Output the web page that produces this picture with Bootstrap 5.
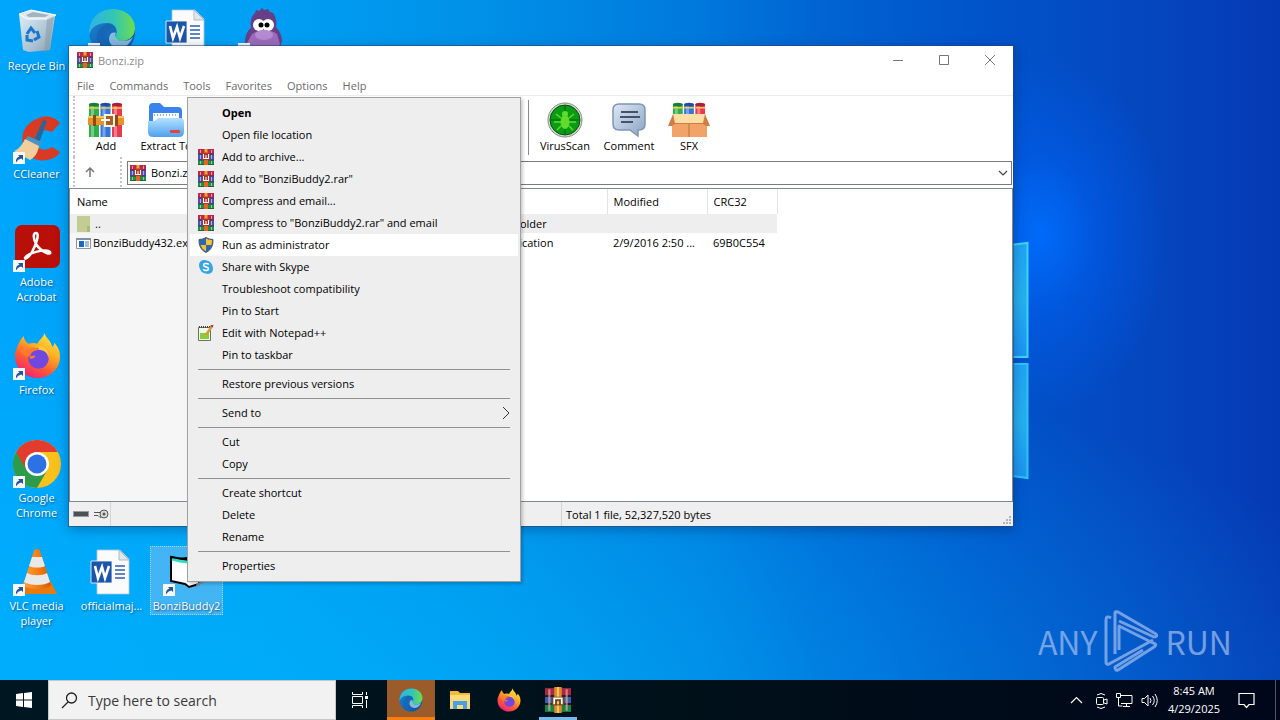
<!DOCTYPE html>
<html lang="en">
<head>
<meta charset="utf-8">
<meta name="viewport" content="width=device-width, initial-scale=1">
<title>Desktop</title>
<link href="https://cdn.jsdelivr.net/npm/bootstrap@5.3.0/dist/css/bootstrap.min.css" rel="stylesheet">
<style>
  body { font-family: "Open Sans", "Noto Sans", sans-serif; font-size: 11px; line-height: 15px; color: #000; }
  button { font: inherit; color: inherit; border: 0; background: none; padding: 0; }
  svg { display: block; }
  .desk {
    background:
      radial-gradient(ellipse 130px 180px at 1040px 235px, rgba(0,110,255,.9), rgba(0,100,255,.4) 45%, rgba(0,90,240,0)),
      radial-gradient(ellipse 85% 420px at 30% 110%, rgba(0,184,255,.6), rgba(0,170,255,0)),
      linear-gradient(to right, #00a6fb 0, #00a0f4 20%, #0090e8 38%, #0078dc 55%, #0064d2 64%, #0054ca 76%, #0448c0 88%, #053ab4 100%);
  }
  .wallpaper { position: absolute; left: 960px; top: 230px; }
  /* desktop shortcuts */
  .shortcuts { display: grid; grid-template-columns: repeat(4, 75px); grid-template-rows: repeat(6, 108px); padding-top: 6px; }
  .shortcut { width: 73px; height: fit-content; padding: 1px 0; color: #fff; text-decoration: none; text-align: center; border: 1px solid transparent; white-space: nowrap; }
  .shortcut svg { margin: 0 auto 2px; }
  .shortcut span { display: block; text-shadow: 1px 1px 2px rgba(0,40,90,.7); }
  .shortcut.selected { background: rgba(120,190,240,.55); border: 1px dotted #9fd6f8; }
  /* archive window */
  .window { position: absolute; left: 69px; right: 267px; top: 46px; bottom: 154px; background: #fff; box-shadow: 0 0 0 1px rgba(40,70,110,.55), 0 3px 12px rgba(0,20,60,.35); }
  .titlebar { height: 30px; padding-left: 8px; color: #8c8c8c; }
  .titlebar .title { gap: 5px; padding-bottom: 2px; }
  .caption { width: 46px; height: 28px; }
  .menubar { height: 20px; color: #6a6a6a; border-bottom: 1px solid #ececec; padding-left: 8px; gap: 15px; }
  .handle { width: 3px; border-left: 2px dotted #c4c4c4; margin-left: 4px; }
  .tools { height: 61px; }
  .tool { width: 60px; white-space: nowrap; }
  .tool svg { margin: 2px auto 0; }
  .more-tools { width: 332px; }
  .rule-v { width: 1px; background: #8a8a8a; margin: 4px 6px 2px 0; }
  .address { height: 30px; }
  .path-box { margin: 4px 1px 2px 0; }
  .path-box svg { position: absolute; left: 3px; top: 4px; }
  .path-box select { height: 24px; border: 1px solid #7a7a7a; border-radius: 0; padding: 0 20px 0 23px; font-size: 11px; line-height: 20px; color: #000; background-size: 10px; background-position: right 3px center;
    background-image: url("data:image/svg+xml,%3Csvg xmlns='http://www.w3.org/2000/svg' viewBox='0 0 10 10'%3E%3Cpath d='M1 3l4 4 4-4' fill='none' stroke='%23444' stroke-width='1.2'/%3E%3C/svg%3E"); }
  .files { border: 1px solid #828790; margin-top: 1px; background: linear-gradient(to right, #f6f6f6 213px, #fff 213px); }
  .files table { table-layout: fixed; width: 707px; border-collapse: collapse; }
  .files th { height: 25px; font-weight: 400; padding: 0 6px; background: #fff; border-right: 1px solid #e3e3e3; }
  .files th:first-child { padding-left: 7px; }
  .files td { height: 19px; padding: 0 6px; white-space: nowrap; overflow: hidden; text-overflow: ellipsis; }
  .files td:first-child { padding-left: 5px; }
  .files .focused td { background: #eee; }
  .status { height: 24px; background: #efefef; }
  .status-keys { width: 42px; border-right: 1px solid #d4d4d4; padding-left: 4px; }
  .status-mid { width: 451px; border-right: 1px solid #d4d4d4; }
  /* context menu */
  .context { position: absolute; left: 187px; top: 97px; width: 334px; padding: 4px 2px; background: #eee; border: 1px solid #a0a0a0; box-shadow: 2px 2px 3px rgba(0,0,0,.2); list-style: none; margin: 0; }
  .context button { width: 100%; height: 22px; padding-bottom: 1px; display: flex; align-items: center; text-align: left; }
  .context .slot { width: 32px; padding-left: 8px; flex: none; }
  .context .active { background: #fff; }
  .context hr { margin: 3px 8px; border-top: 1px solid #919191; opacity: 1; }
  /* watermark */
  .brand { position: absolute; right: 48px; bottom: 8px; color: #a4c0f0; opacity: .7; font-family: "Noto Sans CJK SC", sans-serif; font-weight: 400; font-size: 32px; line-height: 62px; }
  .brand svg { margin: 0 6px; }
  /* taskbar */
  .taskbar { height: 40px; background: linear-gradient(to right, #001722, #001019 55%, #00071a); color: #fff; }
  .taskbar .slotbtn { width: 48px; margin-right: 1px; display: flex; align-items: center; justify-content: center; }
  .search { width: 288px; background: #f2f2f2; border: 1px solid #c8c8c8; padding-left: 12px; }
  .search input { border: 0; background: none; padding: 1px 0 0 10px; font-size: 14px; line-height: 20px; color: #333; min-width: 0; outline: 0; }
  .search input::placeholder { color: #3a3a3a; opacity: 1; }
  .taskbar .attention { background: #9b5b2b; border-bottom: 3px solid #f77f0e; padding-top: 3px; margin-left: 3px; }
  .running { border-bottom: 3px solid transparent; padding-top: 3px; background: linear-gradient(#76b9ed, #76b9ed) bottom center / 38px 3px no-repeat border-box; }
  .clock { width: 72px; line-height: 18px; }
  .peek { width: 5px; border-left: 1px solid #4a5566; }
</style>
</head>
<body>
<svg width="0" height="0" class="position-absolute" aria-hidden="true">
  <defs>
    <linearGradient id="gEdge" x1="0" y1="0" x2="1" y2="0"><stop offset="0" stop-color="#2cb4e8"/><stop offset=".55" stop-color="#34c6b4"/><stop offset="1" stop-color="#6fdc4c"/></linearGradient>
    <linearGradient id="gEdge2" x1="0" y1="0" x2="1" y2="1"><stop offset="0" stop-color="#1c8ad8"/><stop offset="1" stop-color="#0c4c98"/></linearGradient>
    <linearGradient id="gFox" x1=".9" y1="0" x2=".3" y2="1"><stop offset="0" stop-color="#fff04a"/><stop offset=".4" stop-color="#ffae22"/><stop offset=".7" stop-color="#ff5a34"/><stop offset="1" stop-color="#f0207c"/></linearGradient>
    <linearGradient id="gFold" x1="0" y1="0" x2="0" y2="1"><stop offset="0" stop-color="#b4e2ff"/><stop offset="1" stop-color="#4f9ff0"/></linearGradient>
    <linearGradient id="gBub" x1="0" y1="0" x2="1" y2="1"><stop offset="0" stop-color="#dfe9f6"/><stop offset="1" stop-color="#8ba3c4"/></linearGradient>
    <linearGradient id="gBin" x1="0" y1="0" x2="1" y2="1"><stop offset="0" stop-color="#eef3f7"/><stop offset=".6" stop-color="#b9c6d1"/><stop offset="1" stop-color="#8d9ca8"/></linearGradient>
    <linearGradient id="gCone" x1="0" y1="0" x2="1" y2="0"><stop offset="0" stop-color="#ffa040"/><stop offset=".5" stop-color="#f98012"/><stop offset="1" stop-color="#d55a00"/></linearGradient>
    <linearGradient id="gPane" x1="0" y1="0" x2="0" y2="1"><stop offset="0" stop-color="#1fa4f4"/><stop offset=".5" stop-color="#26b0ef"/><stop offset="1" stop-color="#1c94f4"/></linearGradient>
    <symbol id="rar" viewBox="0 0 16 16">
      <path d="M0 0h16v5H0z" fill="#b82a4c"/><path d="M0 5h16v6H0z" fill="#4a52b4"/><path d="M0 11h16v5H0z" fill="#1f9048"/>
      <path d="M0 4.500h16v1H0zM0 10.500h16v1H0zM0 15.300h16v.7H0z" fill="#3a1c38" opacity=".6"/>
      <path d="M2 1h1v3H2zM13 1h1v3h-1zM2 6h1v4H2zM13 6h1v4h-1zM2 12h1v3H2zM13 12h1v3h-1z" fill="#f0d0d8" opacity=".7"/>
      <path d="M6 0h4v16H6z" fill="#e8641c"/><path d="M7 0h2v3H7z" fill="#f7a23a"/>
      <path d="M4 4h8v7H4z" fill="#a03c34"/>
      <path d="M5 5h1v4h1.500V6h1v3H10V5h1v5H5z" fill="#fff"/>
    </symbol>
    <symbol id="arrow" viewBox="0 0 12 12"><path d="M0 0h12v12H0z" fill="#f6f8fa"/><path d="M3 10.500C2.500 7 4 5 6.500 4.500L5 3h5v5L8.300 6.400C6 6.800 4.500 8 3 10.500z" fill="#23549c"/></symbol>
    <symbol id="edge" viewBox="0 0 48 48">
      <circle cx="24" cy="24" r="23" fill="url(#gEdge2)"/>
      <path d="M1 22C3 8 13 1 25 1c13 0 22 9 22 19 0 8-6 13-13 13-6 0-8-3-6-6 2-4 0-12-9-12C10 15 3 19 1 27z" fill="url(#gEdge)"/>
      <path d="M20 16c-8 2-12 8-11 16 1 8 8 14 15 15-5-4-8-10-7-17 0-5 4-10 10-10-2-3-4-4-7-4z" fill="#1667b6"/>
      <path d="M28 25c-2 4 0 8 6 8 4 0 8-1 11-4-3 7-8 11-14 11-8 0-12-8-9-13 1-2 3-3 6-2z" fill="#d4f1ff" opacity=".6"/>
    </symbol>
    <symbol id="fox" viewBox="0 0 48 48">
      <path d="M31 1c-1 5-6 7-7 11-5-2-9 0-9 0s-5-3-5-8C6 8 3 15 1 22c-1 16 11 25 23 25s23-9 23-22c0-7-3-11-6-14 0 3-1 4-2 4-1-6-6-8-8-14z" fill="url(#gFox)"/>
      <circle cx="25" cy="27" r="10.500" fill="#7048e0"/>
      <path d="M16 27c0-5 4-9 10-9-4-3-9-3-12 0l-8-3c0 5 3 9 7 10l9-1c-1 3-4 4-6 3z" fill="#ff7a2c"/>
      <path d="M25 18c6 0 10 4 10 9 2-7-3-13-10-13z" fill="#ffc63a"/>
    </symbol>
    <symbol id="word" viewBox="0 0 48 48">
      <path d="M9 2h23l9 9v35H9z" fill="#fbfbfb" stroke="#b4c4d2" stroke-width=".8"/><path d="M31 2v10h10z" fill="#dfe6ec" stroke="#9db0c0" stroke-width=".8"/>
      <path d="M27 18h10M27 22h10M27 26h10M27 30h10" stroke="#2b5fae" stroke-width="1.300"/>
      <path d="M3 13h21v22H3z" fill="#1c56ac" stroke="#fff" stroke-width=".8"/><path d="M7 18l3 12 4-11 3 11 4-12" fill="none" stroke="#fff" stroke-width="2.600"/>
    </symbol>
    <symbol id="books" viewBox="0 0 36 36">
      <path d="M1 2h10v33H1z" fill="#2fae49"/><path d="M12.500 2h10v33h-10z" fill="#3474dc"/><path d="M24 2h10v33H24z" fill="#e83a52"/>
      <path d="M3 2h3v33H3zM14.500 2h3v33h-3zM26 2h3v33h-3z" fill="#fff" opacity=".35"/>
      <ellipse cx="6" cy="2.500" rx="5" ry="1.800" fill="#1b7b34"/><ellipse cx="17.500" cy="2.500" rx="5" ry="1.800" fill="#1f4da4"/><ellipse cx="29" cy="2.500" rx="5" ry="1.800" fill="#ab1c3c"/>
      <path d="M1 6h10M12.500 6h10M24 6h10" stroke="#f3cf3d" stroke-width="1.500"/>
    </symbol>
    <symbol id="rarBig" viewBox="0 0 24 24">
      <path d="M0 1h24v7H0z" fill="#a82844"/><path d="M0 9h24v6H0z" fill="#3c5cb4"/><path d="M0 16h24v7H0z" fill="#1f8044"/>
      <path d="M0 7.500h24v1.500H0zM0 15h24v1.500H0z" fill="#2c1420"/>
      <path d="M3 2h2v20H3zM19 2h2v20h-2z" fill="#e8c4b0" opacity=".6"/>
      <path d="M8.500 0h7v24h-7z" fill="#d88a2c"/><path d="M11 0h2v24h-2z" fill="#f7c45a"/>
      <path d="M6 9h12v8H6z" fill="#6c4420"/><path d="M8.500 16v-5.500h7V16" fill="none" stroke="#fff" stroke-width="1.600"/><path d="M11 13h2v3h-2z" fill="#f7c45a"/>
    </symbol>
  </defs>
</svg>

<div class="d-flex flex-column vh-100 overflow-hidden">
  <main class="desk position-relative flex-grow-1">
    <svg class="wallpaper" width="70" height="260" viewBox="0 0 70 260" aria-hidden="true">
      <path d="M0 21L67.500 13v114H0z" fill="url(#gPane)" stroke="#38d6f8" stroke-width="2"/>
      <path d="M0 134h67.500v114L0 239z" fill="url(#gPane)" stroke="#30c4fa" stroke-width="2"/>
    </svg>

    <div class="shortcuts">
      <a href="#" class="shortcut" style="grid-area:1/1"><svg width="48" height="48" viewBox="0 0 48 48"><path d="M6 6l36 2-5 34-21 2-6-2z" fill="url(#gBin)" opacity=".93"/><path d="M6 6l12-4 25 5-7 4H14z" fill="#dfe8ee" stroke="#fff"/><path d="M13 7l7-3 16 3-4 2H16z" fill="#a3b3bf"/><path d="M34 11l7-3-5 34-5 2z" fill="#8797a2" opacity=".5"/><path d="M14 26l4-6 4 5M24 23l2 6-5 3M20 33l-6-1 0-5" fill="none" stroke="#1a75cc" stroke-width="3"/></svg><span>Recycle Bin</span></a>
      <a href="#" class="shortcut" style="grid-area:2/1"><svg width="48" height="48" viewBox="0 0 48 48"><path d="M47 7C42 1 34-1 26 2 14 6 7 16 10 29c3 12 14 17 24 15 6-1 11-4 13-8l-8-5c-5 4-15 4-17-5-2-8 5-15 17-10z" fill="#d83a24"/><path d="M30 4l4 1-8 22-5-3z" fill="#2c6594"/><path d="M15 20l14 6-3 6-15-7z" fill="#4a93c4"/><path d="M12 23l14 7c-1 7-5 12-9 14L1 35c5-2 8-6 11-12z" fill="#f0cf9c"/><use href="#arrow" y="36" width="12" height="12"/></svg><span>CCleaner</span></a>
      <a href="#" class="shortcut" style="grid-area:3/1"><svg width="48" height="48" viewBox="0 0 48 48"><rect x="2" y="1" width="45" height="43" rx="7" fill="#b80f08"/><path d="M12 34c2-5 22-10 25-6 2 4-9 0-14-8-3-6-3-11 0-11 4 0 0 12-4 19-3 5-7 8-7 6z" fill="none" stroke="#fff" stroke-width="2.500"/><use href="#arrow" y="36" width="12" height="12"/></svg><span>Adobe<br>Acrobat</span></a>
      <a href="#" class="shortcut" style="grid-area:4/1"><svg width="48" height="48" viewBox="0 0 48 48"><use href="#fox" x="1" width="47" height="47"/><use href="#arrow" y="36" width="12" height="12"/></svg><span>Firefox</span></a>
      <a href="#" class="shortcut" style="grid-area:5/1"><svg width="48" height="48" viewBox="0 0 48 48"><circle cx="24" cy="24" r="24" fill="#f8c11c"/><path d="M24 24L3.200 12A24 24 0 0 0 24 48l10.400-18z" fill="#2d9c4a"/><path d="M24 12h20.800A24 24 0 0 0 3.200 12l10.400 18z" fill="#e33b2e"/><circle cx="24" cy="24" r="12" fill="#fff"/><circle cx="24" cy="24" r="9.500" fill="#2d72e4"/><use href="#arrow" y="36" width="12" height="12"/></svg><span>Google<br>Chrome</span></a>
      <a href="#" class="shortcut" style="grid-area:6/1"><svg width="48" height="48" viewBox="0 0 48 48"><path d="M11 34h27l6 12H6z" fill="#e97a10"/><path d="M24 1c2 0 3 1 3 2l11 34c-3 5-25 5-28 0L21 3c0-1 1-2 3-2z" fill="url(#gCone)"/><path d="M19 9h10l3 9c-4 2-12 2-16 0zM14 25c5 3 15 3 20 0l3 9c-6 4-20 4-26 0z" fill="#e9e9e9"/><use href="#arrow" y="36" width="12" height="12"/></svg><span>VLC media<br>player</span></a>
      <a href="#" class="shortcut" style="grid-area:1/2" aria-label="Microsoft Edge"><svg width="48" height="48" viewBox="0 0 48 48"><use href="#edge" width="48" height="48"/><use href="#arrow" y="35" width="12" height="12"/></svg></a>
      <a href="#" class="shortcut" style="grid-area:6/2"><svg width="48" height="48"><use href="#word" width="48" height="48"/></svg><span>officialmaj...</span></a>
      <a href="#" class="shortcut" style="grid-area:1/3" aria-label="Document"><svg width="48" height="48"><use href="#word" width="48" height="48"/></svg></a>
      <a href="#" class="shortcut selected" style="grid-area:6/3"><svg width="48" height="48" viewBox="0 0 48 48"><path d="M8 9l8 2 8-1 12 4v22l-10 3-4-3-14-3z" fill="#fff" stroke="#000" stroke-width="2"/><path d="M9 11l8 2 8 1" stroke="#2ce0c8" stroke-width="3"/><path d="M8 9l18 3" stroke="#000" stroke-width="2"/><path d="M34 35l12-4-14 9z" fill="#6c8ca4"/><use href="#arrow" y="36" width="12" height="12"/></svg><span>BonziBuddy2</span></a>
      <a href="#" class="shortcut" style="grid-area:1/4" aria-label="Bonzi Buddy"><svg width="48" height="48" viewBox="0 0 48 48"><path d="M15 7l2-2 1-3 3 1 3-3 2 2 4-1 2 3 3 1c3 4 4 9 3 14 4 4 6 9 6 14l-4 13H11L7 34c0-6 2-11 6-14-1-5 0-10 2-13z" fill="#663f86"/><path d="M14 26c8-5 18-5 25 0l3 10-6 10H15L9 35z" fill="#9c6cbc"/><circle cx="21" cy="17" r="6" fill="#fff"/><circle cx="30" cy="17" r="6" fill="#fff"/><circle cx="23" cy="17" r="2.500"/><circle cx="29" cy="17" r="2.500"/><ellipse cx="26" cy="27" rx="9" ry="5" fill="#b58ad2"/><use href="#arrow" y="35" width="12" height="12"/></svg></a>
    </div>

    <section class="window d-flex flex-column" aria-label="Bonzi.zip">
      <header class="titlebar d-flex">
        <div class="title d-flex align-items-center flex-grow-1"><svg width="16" height="16"><use href="#rar"/></svg><span>Bonzi.zip</span></div>
        <button class="caption" aria-label="Minimize"><svg class="mx-auto" width="12" height="12"><path d="M1 6.500h10" stroke="#777"/></svg></button>
        <button class="caption" aria-label="Maximize"><svg class="mx-auto" width="12" height="12"><path d="M1.500 1.500h9v9h-9z" fill="none" stroke="#777"/></svg></button>
        <button class="caption" aria-label="Close"><svg class="mx-auto" width="12" height="12"><path d="M1 1l10 10M11 1L1 11" stroke="#777"/></svg></button>
      </header>
      <nav class="menubar d-flex">
        <button>File</button><button>Commands</button><button>Tools</button><button>Favorites</button><button>Options</button><button>Help</button>
      </nav>
      <div class="tools d-flex">
        <div class="handle"></div>
        <button class="tool"><svg width="36" height="36" viewBox="0 0 36 36"><use href="#books" width="36" height="36"/><path d="M0 14h36v9H0z" fill="#e8922a"/><path d="M0 14h36v2H0z" fill="#ffc55c"/><path d="M5 13h3v11H5zM27 13h3v11h-3z" fill="#8e4a12"/><path d="M17 13h9v11h-9z" fill="#a8602a" stroke="#fff4dc" stroke-width="2"/><path d="M13 18h9" stroke="#fff" stroke-width="2"/></svg><span>Add</span></button>
        <button class="tool"><svg width="36" height="36" viewBox="0 0 36 36"><path d="M1 5q0-4 4-4h7l4 4h14q4 0 4 4v14H1z" fill="#3a82ec"/><path d="M5 11h26v8H5z" fill="#fff"/><path d="M6 13h24" stroke="#8fb0d4" stroke-width="2" stroke-dasharray="1 2"/><path d="M0 19l7 0 3-3h22q4 0 4 4v10q0 5-5 5H5q-5 0-5-5z" fill="url(#gFold)"/><rect x="22" y="28" width="10" height="3" rx="1" fill="#e2453c"/></svg><span>Extract To</span></button>
        <div class="more-tools"></div>
        <div class="rule-v"></div>
        <button class="tool"><svg width="36" height="36" viewBox="0 0 36 36"><circle cx="18" cy="18" r="17" fill="#d5dcd5" stroke="#818b81"/><circle cx="18" cy="18" r="15" fill="#0a9c12" stroke="#0c4c10"/><path d="M18 4v28M4 18h28" stroke="#0b5e10"/><ellipse cx="18" cy="20" rx="4.500" ry="7" fill="#5fdc2c"/><circle cx="18" cy="12" r="3" fill="#5fdc2c"/><path d="M14 16l-5-4M22 16l5-4M14 20H7M22 20h7M14 24l-4 4M22 24l4 4" stroke="#5fdc2c" stroke-width="1.500"/></svg><span>VirusScan</span></button>
        <button class="tool ms-1"><svg width="36" height="36" viewBox="0 0 36 36"><path d="M8 2h20q6 0 6 6v14q0 6-6 6h-1v6l-8-6H8q-6 0-6-6V8q0-6 6-6z" fill="url(#gBub)" stroke="#7d94b4" stroke-width="1.500"/><path d="M10 10h17M9 15h20M10 20h12" stroke="#43536c" stroke-width="2"/></svg><span>Comment</span></button>
        <button class="tool"><svg width="42" height="36" viewBox="0 0 42 36"><svg x="4" y="0" width="35" height="35"><use href="#books" width="35" height="35"/></svg><path d="M4 19h35v16H4z" fill="#f2a468"/><path d="M5 12h33l-1 10H6z" fill="#fbdfa4"/><path d="M5 12l-5 12h4l3-2h28l3 2h4l-5-12-2 9H7z" fill="#cf7e48"/><path d="M21 22v13" stroke="#b8703c"/></svg><span>SFX</span></button>
      </div>
      <div class="address d-flex">
        <div class="handle"></div>
        <button class="px-2" aria-label="Up one level"><svg width="12" height="12"><path d="M6 11V2M2 6l4-4 4 4" fill="none" stroke="#777" stroke-width="1.500"/></svg></button>
        <div class="handle ms-3"></div>
        <div class="path-box position-relative flex-grow-1 ms-1">
          <svg width="16" height="16" aria-hidden="true"><use href="#rar"/></svg>
          <select class="form-select" aria-label="Path"><option>Bonzi.zip</option></select>
        </div>
      </div>
      <div class="files flex-grow-1 overflow-hidden">
        <table>
          <colgroup><col style="width:213px"><col style="width:104px"><col style="width:103px"><col style="width:117px"><col style="width:100px"><col style="width:70px"></colgroup>
          <thead><tr><th>Name</th><th></th><th></th><th></th><th>Modified</th><th>CRC32</th></tr></thead>
          <tbody>
            <tr class="focused"><td><div class="d-flex align-items-center"><svg class="me-1" width="16" height="16"><path d="M2 0h13v16H2z" fill="#c3cd92"/><path d="M12 10h3v6h-3z" fill="#aab878"/></svg>..</div></td><td></td><td></td><td>File folder</td><td></td><td></td></tr>
            <tr><td><div class="d-flex align-items-center"><svg width="18" height="14"><path d="M1.500 2.500h14v10h-14z" fill="#fff" stroke="#8b96a4"/><path d="M1 2h15v2H1z" fill="#8290a2"/><path d="M4 5h5v6H4z" fill="#1768c8"/><path d="M10 6h4M10 8h4M10 10h4" stroke="#4a7fb4"/></svg>BonziBuddy432.exe</div></td><td></td><td></td><td>Application</td><td>2/9/2016 2:50 ...</td><td>69B0C554</td></tr>
          </tbody>
        </table>
      </div>
      <footer class="status d-flex align-items-center">
        <div class="status-keys h-100 d-flex align-items-center gap-1"><svg width="16" height="8"><rect x=".5" y="1.500" width="15" height="5" fill="#4a5058" stroke="#999"/></svg><svg width="16" height="10"><path d="M1 3.500h9M1 6.500h4l2 2 3-2" fill="none" stroke="#555"/><circle cx="11" cy="5" r="4" fill="#ddd" stroke="#555"/><circle cx="11" cy="5" r="1.500" fill="#555"/></svg></div>
        <div class="status-mid h-100"></div>
        <span class="ps-1 flex-grow-1">Total 1 file, 52,327,520 bytes</span>
        <svg class="align-self-end" width="12" height="12"><path d="M8 2h2v2H8zM5 5h2v2H5zM8 5h2v2H8zM2 8h2v2H2zM5 8h2v2H5zM8 8h2v2H8z" fill="#b4b4b4"/></svg>
      </footer>
    </section>

    <ul class="context">
      <li><button class="fw-bold"><span class="slot"></span>Open</button></li>
      <li><button><span class="slot"></span>Open file location</button></li>
      <li><button><span class="slot"><svg width="16" height="16"><use href="#rar"/></svg></span>Add to archive...</button></li>
      <li><button><span class="slot"><svg width="16" height="16"><use href="#rar"/></svg></span>Add to "BonziBuddy2.rar"</button></li>
      <li><button><span class="slot"><svg width="16" height="16"><use href="#rar"/></svg></span>Compress and email...</button></li>
      <li><button><span class="slot"><svg width="16" height="16"><use href="#rar"/></svg></span>Compress to "BonziBuddy2.rar" and email</button></li>
      <li><button class="active"><span class="slot"><svg width="16" height="16"><path d="M8 .5Q11 2.500 15 2.500 15.500 12 8 15.500.500 12 1 2.500 5 2.500 8 .5z" fill="#2a68b4" stroke="#4c5668"/><path d="M8 1.500q3 1.500 6 1.500.1 2.500-.6 5H8zM8 8v6.500Q3.800 12 2.500 8z" fill="#f8c22c"/></svg></span>Run as administrator</button></li>
      <li><button><span class="slot"><svg width="16" height="16"><circle cx="6" cy="6" r="5" fill="#35a4e4"/><circle cx="10" cy="10" r="5" fill="#35a4e4"/><circle cx="8" cy="8" r="6.500" fill="#35a4e4"/><path d="M10.800 5.500C9.500 4 5.600 4 5.600 6.200 5.600 8.400 10.500 7.300 10.500 9.700 10.500 12 6.500 12 5.200 10.300" fill="none" stroke="#fff" stroke-width="1.600"/></svg></span>Share with Skype</button></li>
      <li><button><span class="slot"></span>Troubleshoot compatibility</button></li>
      <li><button><span class="slot"></span>Pin to Start</button></li>
      <li><button><span class="slot"><svg width="16" height="16"><path d="M.5 2.500h12v13H.5z" fill="#f2f8ea" stroke="#66745e"/><path d="M2 8h9v6H2z" fill="#88cc38"/><path d="M1 2h11" stroke="#444" stroke-width="2" stroke-dasharray="1 1"/><path d="M14 1L8 10" stroke="#d89c34" stroke-width="2.500"/><path d="M14.500 0l-1 2" stroke="#a04444" stroke-width="2.500"/></svg></span>Edit with Notepad++</button></li>
      <li><button><span class="slot"></span>Pin to taskbar</button></li>
      <li><hr></li>
      <li><button><span class="slot"></span>Restore previous versions</button></li>
      <li><hr></li>
      <li><button><span class="slot"></span><span class="flex-grow-1">Send to</span><svg class="me-2" width="8" height="14"><path d="M1 1l6 6-6 6" fill="none" stroke="#333"/></svg></button></li>
      <li><hr></li>
      <li><button><span class="slot"></span>Cut</button></li>
      <li><button><span class="slot"></span>Copy</button></li>
      <li><hr></li>
      <li><button><span class="slot"></span>Create shortcut</button></li>
      <li><button><span class="slot"></span>Delete</button></li>
      <li><button><span class="slot"></span>Rename</button></li>
      <li><hr></li>
      <li><button><span class="slot"></span>Properties</button></li>
    </ul>

    <div class="brand d-flex align-items-center">
      <span>ANY</span>
      <svg width="56" height="62" viewBox="0 0 56 62" fill="none" stroke="#a4c0f0" stroke-width="3" stroke-linejoin="round"><path d="M12 44V3q0-2 3-1l38 22q2 3-2 3L16 11"/><path d="M8 8q-5-3-5 2v42q0 3 3 2l44-24"/><path d="M16 40V16l34 17q5 1 1 4L15 60q-3 1-3-3l28-17"/></svg>
      <span>RUN</span>
    </div>
  </main>

  <footer class="taskbar d-flex">
    <button class="slotbtn me-0" aria-label="Start"><svg width="16" height="16" fill="#fff"><path d="M0 2l7-1v6.500H0zM8 1l8-1v7.500H8zM0 8.500h7V15l-7-1zM8 8.500h8V16l-8-1z"/></svg></button>
    <label class="search d-flex align-items-center">
      <svg width="17" height="17" fill="none" stroke="#222" stroke-width="1.300"><circle cx="10.500" cy="6" r="5"/><path d="M7 10l-6 6"/></svg>
      <input class="flex-grow-1" type="text" placeholder="Type here to search" aria-label="Search">
    </label>
    <button class="slotbtn me-0" aria-label="Task View"><svg width="17" height="16" fill="none" stroke="#fff"><path d="M.5 4.500h10v7H.5zM.5 0v2.500h10V0M.5 16v-2.500h10V16M14.500 0v3M14.500 8v8"/><path d="M13 4h3v3h-3z" fill="#fff" stroke="none"/></svg></button>
    <button class="slotbtn attention" aria-label="Microsoft Edge"><svg width="24" height="24"><use href="#edge"/></svg></button>
    <button class="slotbtn" aria-label="File Explorer"><svg width="22" height="20"><path d="M1 1h8l2 2h10v16H1z" fill="#f0b938"/><path d="M1 5h20v14H1z" fill="#fbd978"/><path d="M4 11h14v8H4z" fill="#48a0e4"/><path d="M8 15h6v4H8z" fill="#fbd978"/></svg></button>
    <button class="slotbtn" aria-label="Firefox"><svg width="24" height="24"><use href="#fox"/></svg></button>
    <button class="slotbtn running" aria-label="WinRAR"><svg width="26" height="26"><use href="#rarBig"/></svg></button>
    <div class="d-flex align-items-center ms-auto">
      <button class="me-2" aria-label="Show hidden icons"><svg width="13" height="8"><path d="M1 7l5.500-5.500L12 7" fill="none" stroke="#fff" stroke-width="1.200"/></svg></button>
      <button class="mx-1" aria-label="Meet Now"><svg width="13" height="17" fill="none" stroke="#fff"><rect x="1.500" y="5.500" width="7" height="7" rx="1"/><path d="M9 8l3-1v5l-3-1M2 3q4-3 8 0M2 15q4 3 8 0"/></svg></button>
      <button class="ms-1 me-2" aria-label="Network"><svg width="17" height="14" fill="none" stroke="#fff"><path d="M5 2.500h11v8H5M10.500 10.500v3M7 13.500h7M.5.500h4v4h-4zM2.500 5v8h4"/></svg></button>
      <button aria-label="Volume"><svg width="17" height="15" fill="none" stroke="#fff"><path d="M1 5.500h2.500l3.500-3.500v11L3.500 9.500H1zM9 5q2 2.500 0 5M11.500 3q3.500 4.500 0 9M14 1q4.500 6.500 0 13"/></svg></button>
      <div class="clock text-center"><div>8:45 AM</div><div>4/29/2025</div></div>
      <button class="ms-2 me-3" aria-label="Notifications"><svg width="17" height="17"><path d="M1 1.500h15v11h-5l-2.500 3-2.500-3H1z" fill="none" stroke="#fff" stroke-width="1.200"/></svg></button>
    </div>
    <div class="peek ms-1"></div>
  </footer>
</div>
<script src="https://cdn.jsdelivr.net/npm/bootstrap@5.3.0/dist/js/bootstrap.bundle.min.js"></script>
</body>
</html>
